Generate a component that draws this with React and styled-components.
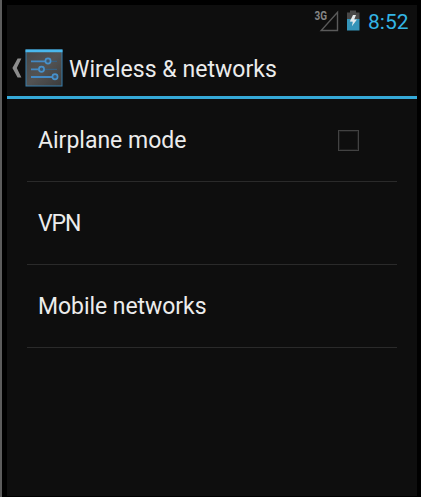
import React from "react";
import styled, { createGlobalStyle } from "styled-components";

const GlobalStyle = createGlobalStyle`
  * { box-sizing: border-box; }
  body { margin: 0; background: #000; overflow: hidden; }
`;

const Device = styled.div`
  width: 421px;
  height: 497px;
  padding: 5px 4px 1px 5px;
  border-left: 2px solid #5c5c5c;
  background: #000;
  font-family: Roboto, "Liberation Sans", sans-serif;
  color: #ececec;
`;

const Screen = styled.main`
  height: 100%;
  background: #0e0e0e;
`;

const StatusBar = styled.header`
  display: flex;
  justify-content: flex-end;
  align-items: center;
  height: 33px;
  padding-right: 8px;
  color: #33b5e5;
`;

const Signal = styled.svg`
  display: block;
  width: 26px;
  height: 23px;
  margin-right: 6px;
`;

const Battery = styled.svg`
  display: block;
  width: 15px;
  height: 21px;
  margin: 0 7px 2px 0;
`;

const Clock = styled.time`
  width: 41px;
  padding-top: 1px;
  font-size: 21px;
  line-height: 32px;
  white-space: nowrap;
`;

const TitleBar = styled.div`
  display: flex;
  align-items: center;
  height: 61px;
  padding: 0 0 0 5px;
  border-bottom: 3px solid #35a9d8;
`;

const BackArrow = styled.svg`
  display: block;
  width: 10px;
  height: 20px;
  margin: 2px 3px 0 0;
`;

const SettingsIcon = styled.svg`
  display: block;
  width: 38px;
  height: 38px;
  margin-top: 2px;
`;

const Title = styled.h1`
  margin: 5px 0 0 6px;
  font-size: 23px;
  font-weight: 400;
  line-height: 28px;
  letter-spacing: 0.04px;
  white-space: nowrap;
`;

const List = styled.ul`
  margin: 0;
  padding: 0 20px;
  list-style: none;
`;

const Row = styled.li`
  display: flex;
  align-items: center;
  justify-content: space-between;
  height: 83px;
  padding: 0 38px 0 11px;
  border-bottom: 1px solid #2a2a2a;
`;

const Label = styled.span`
  padding-top: 2px;
  font-size: 23px;
  line-height: 28px;
  letter-spacing: ${(p) => p.$tracking}px;
  white-space: nowrap;
`;

const Checkbox = styled.span`
  width: 21px;
  height: 21px;
  border: 1px solid #424242;
  outline: 1px solid #1c1c1c;
  outline-offset: -2px;
`;

const rows = [
  { name: "Airplane mode", tracking: 0, checkbox: true },
  { name: "VPN", tracking: -1.1 },
  { name: "Mobile networks", tracking: -0.06 },
];

export default function App() {
  return (
    <Device>
      <GlobalStyle />
      <Screen>
        <StatusBar>
          <Signal viewBox="0 0 26 23">
            <text x="0.5" y="10" fontSize="12" fontWeight="700" fill="#858585" textLength="12.5" lengthAdjust="spacingAndGlyphs">3G</text>
            <path d="M23.5 2.4v18.1H7.2Z" fill="none" stroke="#5a5a5a" strokeWidth="1.4" />
          </Signal>
          <Battery viewBox="0 0 15 21">
            <path d="M4 0.5h6v2h3.5v7H1v-7h3Z" fill="#484848" />
            <path d="M1 9h12.5v11.5H1Z" fill="#3594b9" />
            <path d="m7 5-3.2 6.6 3 .1-.9 4.6 5.1-6.8H8.2L10 5Z" fill="#e5eaec" />
          </Battery>
          <Clock>8:52</Clock>
        </StatusBar>
        <TitleBar>
          <BackArrow viewBox="0 0 10 20">
            <path d="M9.4 0.5 4.8 10l4.6 9.5H5.6L0.4 10 5.6 0.5Z" fill="#8c8c8c" />
          </BackArrow>
          <SettingsIcon viewBox="0 0 38 38">
            <defs>
              <linearGradient id="panel" x1="0" y1="0" x2="1" y2="1">
                <stop offset="0" stopColor="#464646" />
                <stop offset="0.5" stopColor="#535353" />
                <stop offset="1" stopColor="#3b3b3b" />
              </linearGradient>
            </defs>
            <rect x="1" y="1" width="36" height="36" fill="url(#panel)" stroke="#397fac" />
            <path d="M0.5 0.4h37v2.8h-37Z" fill="#4ab8ec" />
            <path d="M6 12.3H20M6 20.3H13M6 28H27" stroke="#4389c4" strokeWidth="1.8" />
            <path d="M26 12.3h6M19 20.3h13" stroke="#375f80" strokeWidth="1.2" />
            <g fill="#40566a" stroke="#4791cb" strokeWidth="1.7">
              <circle cx="23" cy="12" r="2.6" />
              <circle cx="16.5" cy="20.2" r="2.6" />
              <circle cx="30" cy="27.7" r="2.6" />
            </g>
          </SettingsIcon>
          <Title>Wireless &amp; networks</Title>
        </TitleBar>
        <List>
          {rows.map((row) => (
            <Row key={row.name}>
              <Label $tracking={row.tracking}>{row.name}</Label>
              {row.checkbox && <Checkbox role="checkbox" aria-checked="false" aria-label={row.name} />}
            </Row>
          ))}
        </List>
      </Screen>
    </Device>
  );
}
